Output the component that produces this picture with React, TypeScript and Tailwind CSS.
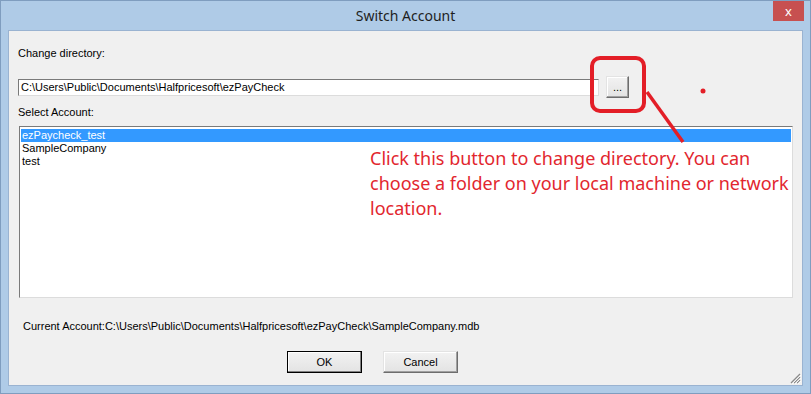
import React from 'react';

const accounts = ['ezPaycheck_test', 'SampleCompany', 'test'];

const WinButton: React.FC<{ label: string; isDefault?: boolean; className?: string }> = ({ label, isDefault, className }) => (
  <button
    className={`h-[22px] text-[11px] text-black bg-gradient-to-b from-[#f2f2f2] to-[#e3e3e3] ${
      isDefault
        ? 'border border-black shadow-[inset_-1px_-1px_0_#808080,inset_1px_1px_0_#ffffff]'
        : 'border border-t-[#e3e3e3] border-l-[#e3e3e3] border-r-[#6d6d6d] border-b-[#6d6d6d] shadow-[inset_-1px_-1px_0_#a0a0a0,inset_1px_1px_0_#ffffff]'
    } ${className ?? ''}`}
  >
    {label}
  </button>
);

export default function App() {
  return (
    <div className="relative w-[811px] h-[394px] bg-[#afcbe7] border border-[#7f9dbf] font-['Liberation_Sans',Arial,sans-serif] overflow-hidden">
      {/* title bar */}
      <div className="relative h-[29px] flex items-center justify-center">
        <span className="font-['Noto_Sans',sans-serif] text-[14px] text-[#1e1e1e] -mt-[1px]">Switch Account</span>
        <div className="absolute right-[6px] top-0 w-[31px] h-[20px] bg-[#c75050] flex items-center justify-center text-white text-[13px] font-['Noto_Sans',sans-serif] leading-none">
          x
        </div>
      </div>

      {/* client area */}
      <div className="relative mx-[7px] h-[356px] bg-[#f0f0f0] border border-[#9ab3d1] flex flex-col text-[11px] leading-[13px] text-black">
        <div className="pl-[9px] pt-[16px]">Change directory:</div>

        <div className="mt-[16px] ml-[9px] flex items-center h-[22px]">
          <div className="w-[581px] h-[17px] bg-white border border-t-[#7a7a7a] border-l-[#7a7a7a] border-r-[#dcdcdc] border-b-[#dcdcdc] pl-[2px] leading-[15px] whitespace-nowrap overflow-hidden">
            C:\Users\Public\Documents\Halfpricesoft\ezPayCheck
          </div>
          <WinButton label="..." className="ml-[7px] w-[23px] leading-[18px]" />
        </div>

        <div className="mt-[8px] pl-[9px]">Select Account:</div>

        <div className="mt-[7px] ml-[10px] w-[774px] h-[172px] bg-white border border-t-[#7a7a7a] border-l-[#7a7a7a] border-r-[#dcdcdc] border-b-[#dcdcdc] pt-[2px] px-[1px]">
          {accounts.map((a, i) => (
            <div
              key={a}
              className={`h-[13px] leading-[13px] pl-[1px] ${i === 0 ? 'bg-[#3399ff] text-white' : 'text-black'}`}
            >
              {a}
            </div>
          ))}
        </div>

        <div className="mt-[22px] pl-[14px]">
          Current Account:C:\Users\Public\Documents\Halfpricesoft\ezPayCheck\SampleCompany.mdb
        </div>

        <div className="mt-[18px] flex gap-[21px] pl-[278px]">
          <WinButton label="OK" isDefault className="w-[75px]" />
          <WinButton label="Cancel" className="w-[75px]" />
        </div>

        {/* resize grip */}
        <svg className="absolute right-[1px] bottom-[1px]" width="12" height="12" viewBox="0 0 12 12">
          <path d="M11 2 L2 11 M11 5 L5 11 M11 8 L8 11" stroke="#8a8a8a" strokeWidth="1.2" />
          <path d="M12 3 L3 12 M12 6 L6 12 M12 9 L9 12" stroke="#ffffff" strokeWidth="0.8" />
        </svg>
      </div>

      {/* red annotation */}
      <svg className="absolute left-[-1px] top-[-1px] pointer-events-none" width="811" height="394">
        <rect x="592" y="58" width="52" height="53" rx="8" ry="8" fill="none" stroke="#e31e27" strokeWidth="4" />
        <line x1="647" y1="92" x2="683" y2="142" stroke="#e31e27" strokeWidth="3.5" />
        <circle cx="703" cy="91" r="2.5" fill="#e31e27" />
      </svg>
      <div className="absolute left-[369px] top-[145px] font-['Noto_Sans',sans-serif] text-[18px] leading-[25px] text-[#e2262e] whitespace-nowrap">
        Click this button to change directory. You can
        <br />
        choose a folder on your local machine or network
        <br />
        location.
      </div>
    </div>
  );
}
